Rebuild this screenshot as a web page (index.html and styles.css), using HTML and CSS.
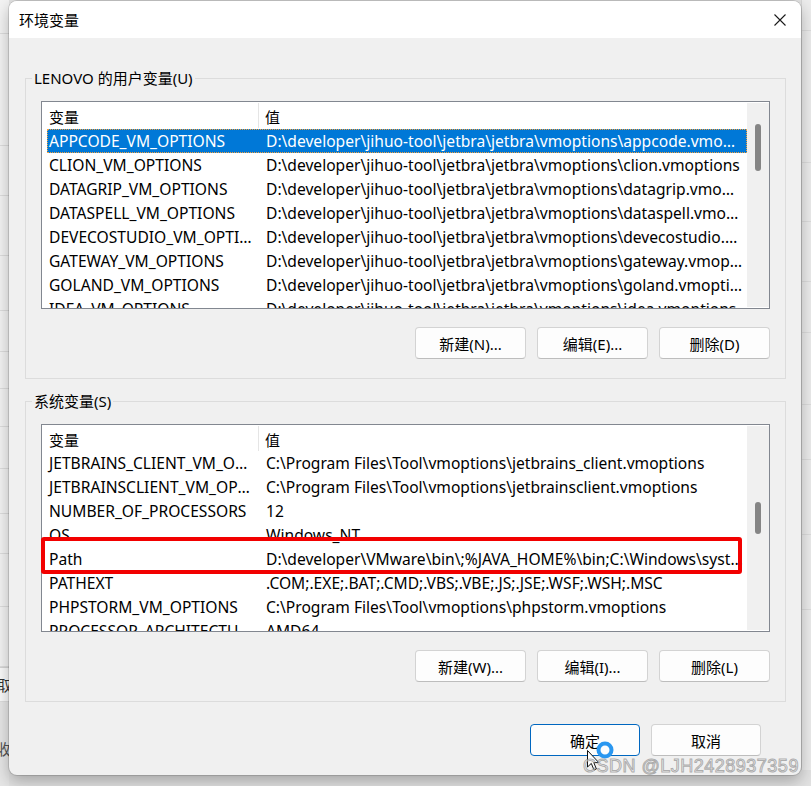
FILE: index.html
```html
<!DOCTYPE html>
<html lang="zh-CN">
<head>
  <meta charset="UTF-8">
  <title>环境变量</title>
  <link rel="stylesheet" href="styles.css">
</head>
<body>
  <div class="desk-left">
    <div class="strip" style="height: 34px"></div>
    <div class="strip" style="height: 112px"></div>
    <div class="strip" style="height: 50px"></div>
    <div class="strip" style="height: 60px"></div>
    <div class="strip" style="height: 55px"></div>
    <div class="strip" style="height: 41px"></div>
    <div class="strip" style="height: 37px"></div>
    <div class="strip" style="height: 38px"></div>
    <div class="strip" style="height: 42px"></div>
    <div class="strip" style="height: 45px"></div>
    <div class="strip" style="height: 40px"></div>
    <div class="strip" style="height: 53px"></div>
    <div class="strip" style="height: 60px"></div>
    <div class="strip strip-text">取</div>
    <div class="strip-foot">收</div>
  </div>

  <div class="dialog">
    <div class="titlebar">
      <span>环境变量</span>
      <svg class="close" width="12" height="12" viewBox="0 0 12 12">
        <path d="M0.5 0.5 L11.5 11.5 M11.5 0.5 L0.5 11.5" stroke="#1a1a1a" stroke-width="1.1" fill="none"/>
      </svg>
    </div>

    <div class="dialog-body">
      <fieldset class="group">
        <legend>LENOVO 的用户变量(U)</legend>
        <div class="listview">
          <div class="list-body">
            <div class="list-head">
              <div class="head-name">变量</div>
              <div class="head-value">值</div>
            </div>
            <div class="row selected"><div class="cell-name">APPCODE_VM_OPTIONS</div><div class="cell-value">D:\developer\jihuo-tool\jetbra\jetbra\vmoptions\appcode.vmoptions</div></div>
            <div class="row"><div class="cell-name">CLION_VM_OPTIONS</div><div class="cell-value">D:\developer\jihuo-tool\jetbra\jetbra\vmoptions\clion.vmoptions</div></div>
            <div class="row"><div class="cell-name">DATAGRIP_VM_OPTIONS</div><div class="cell-value">D:\developer\jihuo-tool\jetbra\jetbra\vmoptions\datagrip.vmoptions</div></div>
            <div class="row"><div class="cell-name">DATASPELL_VM_OPTIONS</div><div class="cell-value">D:\developer\jihuo-tool\jetbra\jetbra\vmoptions\dataspell.vmoptions</div></div>
            <div class="row"><div class="cell-name">DEVECOSTUDIO_VM_OPTIONS</div><div class="cell-value">D:\developer\jihuo-tool\jetbra\jetbra\vmoptions\devecostudio.vmoptions</div></div>
            <div class="row"><div class="cell-name">GATEWAY_VM_OPTIONS</div><div class="cell-value">D:\developer\jihuo-tool\jetbra\jetbra\vmoptions\gateway.vmoptions</div></div>
            <div class="row"><div class="cell-name">GOLAND_VM_OPTIONS</div><div class="cell-value">D:\developer\jihuo-tool\jetbra\jetbra\vmoptions\goland.vmoptions</div></div>
            <div class="row"><div class="cell-name">IDEA_VM_OPTIONS</div><div class="cell-value">D:\developer\jihuo-tool\jetbra\jetbra\vmoptions\idea.vmoptions</div></div>
          </div>
          <div class="scrollbar"><div class="thumb" style="margin-top: 21px; height: 47px"></div></div>
        </div>
        <div class="actions">
          <button>新建(N)...</button>
          <button>编辑(E)...</button>
          <button>删除(D)</button>
        </div>
      </fieldset>

      <fieldset class="group group-system">
        <legend>系统变量(S)</legend>
        <div class="listview">
          <div class="list-body">
            <div class="list-head">
              <div class="head-name">变量</div>
              <div class="head-value">值</div>
            </div>
            <div class="row"><div class="cell-name">JETBRAINS_CLIENT_VM_OPTIONS</div><div class="cell-value">C:\Program Files\Tool\vmoptions\jetbrains_client.vmoptions</div></div>
            <div class="row"><div class="cell-name">JETBRAINSCLIENT_VM_OPTIONS</div><div class="cell-value">C:\Program Files\Tool\vmoptions\jetbrainsclient.vmoptions</div></div>
            <div class="row"><div class="cell-name">NUMBER_OF_PROCESSORS</div><div class="cell-value">12</div></div>
            <div class="row"><div class="cell-name">OS</div><div class="cell-value">Windows_NT</div></div>
            <div class="row"><div class="cell-name">Path</div><div class="cell-value">D:\developer\VMware\bin\;%JAVA_HOME%\bin;C:\Windows\system32;C:\Windows;C:\Windows\System32\Wbem</div></div>
            <div class="row"><div class="cell-name">PATHEXT</div><div class="cell-value">.COM;.EXE;.BAT;.CMD;.VBS;.VBE;.JS;.JSE;.WSF;.WSH;.MSC</div></div>
            <div class="row"><div class="cell-name">PHPSTORM_VM_OPTIONS</div><div class="cell-value">C:\Program Files\Tool\vmoptions\phpstorm.vmoptions</div></div>
            <div class="row"><div class="cell-name">PROCESSOR_ARCHITECTURE</div><div class="cell-value">AMD64</div></div>
          </div>
          <div class="scrollbar"><div class="thumb" style="margin-top: 76px; height: 32px"></div></div>
          <div class="mark"></div>
        </div>
        <div class="actions">
          <button>新建(W)...</button>
          <button>编辑(I)...</button>
          <button>删除(L)</button>
        </div>
      </fieldset>

      <div class="footer">
        <button class="default">确定</button>
        <button>取消</button>
      </div>
    </div>

    <!-- busy pointer hovering the OK button -->
    <svg class="busy" width="20" height="20" viewBox="0 0 20 20">
      <circle cx="10" cy="10" r="6.5" fill="none" stroke="#2a97f0" stroke-width="4"/>
    </svg>
    <svg class="pointer" width="13" height="22" viewBox="0 0 13 22">
      <path d="M0.5 0.5 L0.5 17 L4.3 13.4 L7 20 L9.4 19 L6.8 12.6 L11.8 12.6 Z" fill="#fff" stroke="#111" stroke-width="1"/>
    </svg>
    <div class="watermark">CSDN @LJH2428937359</div>
  </div>

  <div class="desk-right">
    <div class="strip" style="height: 31px"></div>
    <div class="strip" style="height: 132px"></div>
    <div class="strip" style="height: 59px"></div>
    <div class="strip" style="height: 60px"></div>
    <div class="strip" style="height: 51px"></div>
    <div class="strip" style="height: 72px"></div>
    <div class="strip" style="height: 55px"></div>
    <div class="strip" style="height: 75px"></div>
    <div class="strip" style="height: 75px"></div>
  </div>
</body>
</html>
```

FILE: styles.css
```css
* {
  box-sizing: border-box;
}

body {
  margin: 0;
  height: 786px;
  overflow: hidden;
  display: flex;
  align-items: flex-start;
  background: #e2e2e2;
  font-family: "Noto Sans", "Noto Sans CJK SC", sans-serif;
  font-size: 15px;
  color: #000;
}

/* windows behind the dialog */
.desk-left {
  width: 9px;
  flex: none;
  height: 786px;
  display: flex;
  flex-direction: column;
  background: #f3f3f3;
  overflow: hidden;
}

.desk-left .strip,
.desk-right .strip {
  flex: none;
  border-bottom: 1px solid #dddddd;
}

.strip-text {
  height: 35px;
  line-height: 34px;
  text-indent: -3px;
  color: #333;
  background: #fafafa;
  border-top: 1px solid #d5d5d5;
}

.strip-foot {
  flex: 1;
  padding-top: 36px;
  text-indent: -4px;
  color: #555;
  background: #e6e6e6;
}

.desk-right {
  flex: 1;
  height: 770px;
  display: flex;
  flex-direction: column;
  background: #ececec;
  border-left: 1px solid #d6d6d6;
}

/* dialog */
.dialog {
  position: relative;
  flex: none;
  width: 792px;
  height: 774px;
  margin-top: 1px;
  display: flex;
  flex-direction: column;
  background: #f0f0f0;
  border-radius: 8px;
  box-shadow: 0 0 0 1px rgba(0, 0, 0, 0.13), 0 6px 16px rgba(0, 0, 0, 0.28);
  overflow: hidden;
}

.titlebar {
  height: 37px;
  flex: none;
  display: flex;
  align-items: center;
  justify-content: space-between;
  padding: 0 15px 0 10px;
  background: #fff;
  line-height: 20px;
}

.close {
  display: block;
}

.dialog-body {
  padding: 0 15px 0 16px;
}

.group {
  margin: 30px 0 0;
  padding: 13px 15px 19px;
  border: 1px solid #dcdcdc;
  min-width: 0;
}

.group-system {
  margin-top: 12px;
}

.group legend {
  margin-left: -9px;
  padding: 0 2px;
  line-height: 20px;
}

/* list view */
.listview {
  position: relative;
  height: 208px;
  display: flex;
  background: #fff;
  border: 1px solid #828790;
}

.list-body {
  flex: 1;
  min-width: 0;
  overflow: hidden;
  font-size: 15.6px;
}

.list-head {
  height: 27px;
  display: flex;
  padding-top: 1px;
  font-size: 15px;
}

.group-system .list-head {
  height: 26px;
}

.head-name {
  width: 217px;
  height: 25px;
  padding: 2px 0 0 7px;
  line-height: 24px;
  border-right: 1px solid #e5e5e5;
}

.head-value {
  padding: 2px 0 0 6px;
  line-height: 24px;
}

.row {
  display: flex;
  height: 24px;
  line-height: 24px;
  margin-left: 5px;
  white-space: nowrap;
}

.cell-name {
  width: 212px;
  flex: none;
  padding: 0 6px 0 2px;
  overflow: hidden;
  text-overflow: ellipsis;
}

.cell-value {
  flex: 1;
  min-width: 0;
  padding: 0 4px 0 7px;
  overflow: hidden;
  text-overflow: ellipsis;
}

.row.selected {
  background: #0078d7;
  color: #fff;
  outline: 1px dotted #f5a13c;
  outline-offset: -1px;
}

.scrollbar {
  width: 22px;
  flex: none;
  margin: 1px 0;
  background: #f0f0f0;
}

.thumb {
  width: 6px;
  margin-left: 8px;
  border-radius: 3px;
  background: #858585;
}

/* red highlight around the Path row */
.mark {
  position: absolute;
  left: -1px;
  top: 112px;
  width: 701px;
  height: 37px;
  border: 4px solid #f20000;
  border-radius: 3px;
}

/* buttons */
.actions,
.footer {
  display: flex;
  justify-content: flex-end;
  gap: 11px;
}

.actions {
  margin-top: 18px;
}

.actions button {
  width: 111px;
}

.footer {
  margin-top: 22px;
  padding-right: 25px;
}

button {
  width: 110px;
  height: 32px;
  padding: 0;
  font-family: inherit;
  font-size: 15px;
  color: #000;
  background: #fdfdfd;
  border: 1px solid #d3d3d3;
  border-bottom-color: #bdbdbd;
  border-radius: 4px;
}

button.default {
  border: 1px solid #0067c0;
}

/* pointer, busy ring and watermark */
.busy {
  position: absolute;
  left: 586px;
  top: 739px;
}

.pointer {
  position: absolute;
  left: 578px;
  top: 749px;
}

.watermark {
  position: absolute;
  left: 574px;
  top: 755px;
  font-family: "Liberation Sans", sans-serif;
  font-size: 18px;
  letter-spacing: 0.5px;
  line-height: 20px;
  white-space: nowrap;
  color: rgba(255, 255, 255, 0.55);
  -webkit-text-stroke: 1px rgba(110, 110, 110, 0.55);
}
```
